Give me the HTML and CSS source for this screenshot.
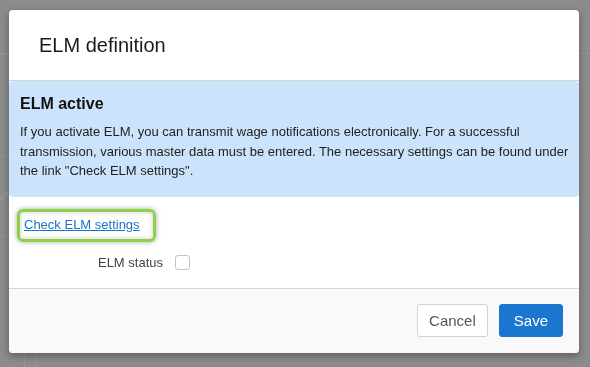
FILE: index.html
```html
<!DOCTYPE html>
<html lang="en">
<head>
    <meta charset="UTF-8">
    <title>ELM definition</title>
    <link rel="stylesheet" href="styles.css">
</head>
<body>
    <div class="page">
        <div class="page-top"></div>
        <div class="page-row row-a"></div>
        <div class="page-row row-b">
            <svg class="edit-icon" width="12" height="12" viewBox="0 0 12 12">
                <path d="M2 10 L2.6 7.6 L8.4 1.8 L10.2 3.6 L4.4 9.4 Z" fill="none" stroke="#a3a3a3" stroke-width="1"/>
            </svg>
        </div>
        <div class="page-cols">
            <div class="col"></div>
            <div class="col"></div>
        </div>
    </div>

    <div class="modal">
        <div class="modal-header">
            <h4 class="modal-title">ELM definition</h4>
        </div>
        <div class="alert">
            <h5>ELM active</h5>
            <p>If you activate ELM, you can transmit wage notifications electronically. For a successful transmission, various master data must be entered. The necessary settings can be found under the link "Check ELM settings".</p>
        </div>
        <div class="modal-body">
            <div class="highlight">
                <a href="#" class="settings-link">Check ELM settings</a>
            </div>
            <div class="form-row">
                <label class="form-label">ELM status</label>
                <span class="checkbox"></span>
            </div>
        </div>
        <div class="modal-footer">
            <button class="btn btn-default">Cancel</button>
            <button class="btn btn-primary">Save</button>
        </div>
    </div>
</body>
</html>
```

FILE: styles.css
```css
body {
    margin: 0;
    height: 367px;
    overflow: hidden;
    background: #8c8c8c;
    font-family: "Liberation Sans", Arial, sans-serif;
    font-size: 13px;
    color: #333;
}

.page {
    height: 100%;
    display: flex;
    flex-direction: column;
}

.page-top {
    height: 53px;
    border-bottom: 1px solid #979797;
}

.page-row {
    border-bottom: 1px solid #939393;
}

.row-a {
    height: 101px;
}

.row-b {
    height: 80px;
    display: flex;
    align-items: center;
}

.edit-icon {
    margin-left: -2px;
}

.page-cols {
    flex: 1;
    display: flex;
    padding-left: 24px;
}

.col {
    width: 10px;
    border-left: 1px solid #969696;
}

.modal {
    position: fixed;
    top: 10px;
    left: 9px;
    width: 570px;
    background: #fff;
    border-radius: 4px;
    box-shadow: 0 3px 9px rgba(0, 0, 0, 0.35);
}

.modal-header {
    padding: 24px 30px 24px;
    border-bottom: 1px solid #d6d6d6;
}

.modal-title {
    margin: 0;
    font-size: 20px;
    line-height: 22px;
    font-weight: normal;
    color: #1a1a1a;
}

.alert {
    background: #cce4fb;
    border-radius: 4px;
    padding: 13px 4px 16px 11px;
}

.alert h5 {
    margin: 0 0 8px;
    font-size: 16px;
    line-height: 20px;
    font-weight: bold;
    color: #111;
}

.alert p {
    margin: 0;
    line-height: 19.5px;
    color: #222;
}

.modal-body {
    padding: 12px 0 15px 8px;
}

.highlight {
    display: inline-block;
    padding: 5px 13px 6px 4px;
    border: 3px solid #8fd24a;
    border-radius: 6px;
    box-shadow: 0 0 5px rgba(0, 0, 0, 0.35), inset 0 0 5px rgba(0, 0, 0, 0.2);
    line-height: 16px;
}

.settings-link {
    color: #1a73c5;
    text-decoration: underline;
}

.form-row {
    display: flex;
    align-items: center;
    height: 20px;
    margin-top: 11px;
}

.form-label {
    width: 146px;
    text-align: right;
    color: #444;
}

.checkbox {
    width: 13px;
    height: 13px;
    margin-left: 12px;
    border: 1px solid #c4c4c4;
    border-radius: 3px;
    background: #fff;
}

.modal-footer {
    display: flex;
    justify-content: flex-end;
    gap: 11px;
    padding: 15px 16px 16px;
    border-top: 1px solid #d6d6d6;
    background: #f9f9f9;
    border-radius: 0 0 4px 4px;
}

.btn {
    height: 33px;
    font-family: "Liberation Sans", Arial, sans-serif;
    font-size: 15px;
    border-radius: 3px;
    cursor: pointer;
}

.btn-default {
    padding: 0 11px;
    background: #fff;
    border: 1px solid #d2d2d2;
    color: #555;
}

.btn-primary {
    padding: 0 14px;
    background: #1a76cf;
    border: 1px solid #1a76cf;
    color: #fff;
}
```
